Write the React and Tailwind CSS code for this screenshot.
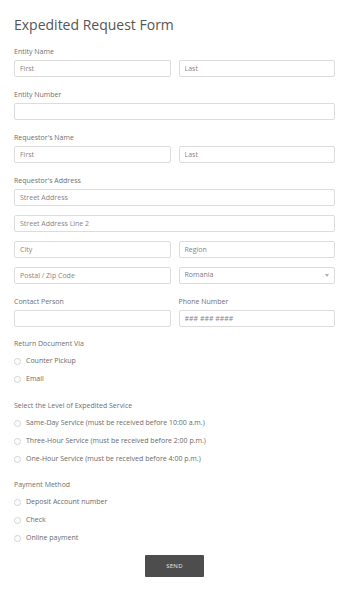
import { useState } from 'react';

const baseInput =
    'block w-full h-[17px] px-[5px] border border-[#dcdcdc] rounded-[2px] bg-white text-[7px] placeholder:text-[#858585] outline-none';
const inputCls = `${baseInput} text-[#555]`;

function Label({ children, className = '' }) {
    return <div className={`text-[7px] leading-[10px] text-[#6f6f6f] ${className}`}>{children}</div>;
}

function Radio({ name, value, label, checked, onChange }) {
    return (
        <label className="flex items-center h-[12px] gap-[5px] cursor-pointer">
            <span className="w-[7px] h-[7px] rounded-full border border-[#d2d2d2] bg-white shrink-0 flex items-center justify-center">
                {checked && <span className="w-[3px] h-[3px] rounded-full bg-[#555]" />}
            </span>
            <input type="radio" name={name} value={value} checked={checked} onChange={onChange} className="hidden" />
            <span className="text-[7px] leading-[10px] text-[#6a6a6a]">{label}</span>
        </label>
    );
}

function RadioGroup({ name, options, value, setValue }) {
    return (
        <div className="mt-[6px] flex flex-col gap-[6px]">
            {options.map(o => (
                <Radio key={o} name={name} value={o} label={o} checked={value === o} onChange={() => setValue(o)} />
            ))}
        </div>
    );
}

export default function App() {
    const [returnVia, setReturnVia] = useState('');
    const [level, setLevel] = useState('');
    const [payment, setPayment] = useState('');

    return (
        <div className="min-h-[592px] bg-white pl-[14px] pr-[15px] pt-[16px] pb-[14px]" style={{ fontFamily: '"Open Sans", "Liberation Sans", sans-serif' }}>
            <h1 className="text-[14px] leading-[18px] text-[#555] font-normal">Expedited Request Form</h1>

            <form onSubmit={e => e.preventDefault()}>
                <Label className="mt-[13px]">Entity Name</Label>
                <div className="mt-[3px] grid grid-cols-2 gap-[8px]">
                    <input className={inputCls} placeholder="First" />
                    <input className={inputCls} placeholder="Last" />
                </div>

                <Label className="mt-[13px]">Entity Number</Label>
                <div className="mt-[3px]">
                    <input className={inputCls} />
                </div>

                <Label className="mt-[13px]">Requestor's Name</Label>
                <div className="mt-[3px] grid grid-cols-2 gap-[8px]">
                    <input className={inputCls} placeholder="First" />
                    <input className={inputCls} placeholder="Last" />
                </div>

                <Label className="mt-[13px]">Requestor's Address</Label>
                <div className="mt-[3px] flex flex-col gap-[9px]">
                    <input className={inputCls} placeholder="Street Address" />
                    <input className={inputCls} placeholder="Street Address Line 2" />
                    <div className="grid grid-cols-2 gap-[8px]">
                        <input className={inputCls} placeholder="City" />
                        <input className={inputCls} placeholder="Region" />
                    </div>
                    <div className="grid grid-cols-2 gap-[8px]">
                        <input className={inputCls} placeholder="Postal / Zip Code" />
                        <div className="relative">
                            <select defaultValue="Romania" className={`${baseInput} appearance-none text-[#7a7a7a]`}>
                                <option>Romania</option>
                                <option>Moldova</option>
                                <option>Hungary</option>
                            </select>
                            <svg className="absolute right-[6px] top-[7px] pointer-events-none" width="4" height="3" viewBox="0 0 4 3">
                                <path d="M0 0 L4 0 L2 3 Z" fill="#b0b0b0" />
                            </svg>
                        </div>
                    </div>
                </div>

                <div className="mt-[13px] grid grid-cols-2 gap-[8px]">
                    <div>
                        <Label>Contact Person</Label>
                        <input className={`${inputCls} mt-[3px]`} />
                    </div>
                    <div>
                        <Label>Phone Number</Label>
                        <input className={`${baseInput} text-[#555] mt-[3px] placeholder:text-[#9a9a9a]`} placeholder="### ### ####" />
                    </div>
                </div>

                <Label className="mt-[12px]">Return Document Via</Label>
                <RadioGroup name="return" options={['Counter Pickup', 'Email']} value={returnVia} setValue={setReturnVia} />

                <Label className="mt-[16px]">Select the Level of Expedited Service</Label>
                <RadioGroup
                    name="level"
                    options={[
                        'Same-Day Service (must be received before 10:00 a.m.)',
                        'Three-Hour Service (must be received before 2:00 p.m.)',
                        'One-Hour Service (must be received before 4:00 p.m.)'
                    ]}
                    value={level}
                    setValue={setLevel}
                />

                <Label className="mt-[15px]">Payment Method</Label>
                <RadioGroup name="payment" options={['Deposit Account number', 'Check', 'Online payment']} value={payment} setValue={setPayment} />

                <div className="mt-[11px] flex justify-center">
                    <button type="submit" className="w-[59px] h-[22px] bg-[#4d4d4d] rounded-[1px] text-[6px] tracking-[0.3px] text-[#e8e8e8]">
                        SEND
                    </button>
                </div>
            </form>
        </div>
    );
}
